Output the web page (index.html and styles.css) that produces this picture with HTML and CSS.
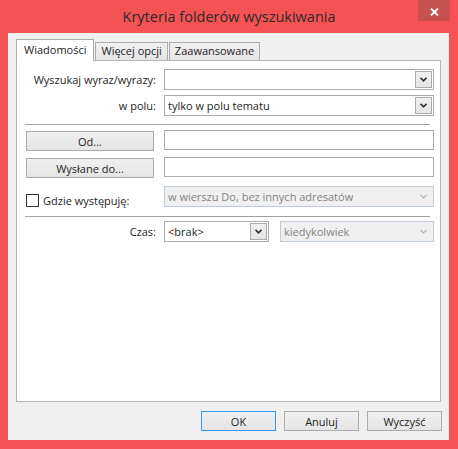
FILE: index.html
```html
<!DOCTYPE html>
<html lang="pl">
<head>
  <meta charset="UTF-8">
  <meta name="viewport" content="width=device-width, initial-scale=1.0">
  <title>Kryteria folderów wyszukiwania</title>
  <link rel="stylesheet" href="styles.css">
</head>
<body>

  <div class="window">
    <!-- Title bar -->
    <div class="titlebar">
      <span class="title">Kryteria folderów wyszukiwania</span>
      <button class="close" aria-label="Zamknij">
        <svg width="9" height="8" viewBox="0 0 9 8"><path d="M1 0.5 L8 7.5 M8 0.5 L1 7.5" stroke="#fff" stroke-width="1.8" fill="none"/></svg>
      </button>
    </div>

    <div class="client">
      <!-- Tabs -->
      <div class="tabs">
        <div class="tab active">Wiadomości</div>
        <div class="tab">Więcej opcji</div>
        <div class="tab">Zaawansowane</div>
      </div>

      <div class="panel">
        <div class="row">
          <label class="label">Wyszukaj wyraz/wyrazy:</label>
          <div class="combo wide">
            <span class="combo-text"></span>
            <span class="combo-btn"><svg width="7" height="5" viewBox="0 0 7 5"><path d="M0.5 0.8 L3.5 3.8 L6.5 0.8" stroke="#333" stroke-width="1.7" fill="none"/></svg></span>
          </div>
        </div>

        <div class="row gap-5">
          <label class="label">w polu:</label>
          <div class="combo wide">
            <span class="combo-text">tylko w polu tematu</span>
            <span class="combo-btn"><svg width="7" height="5" viewBox="0 0 7 5"><path d="M0.5 0.8 L3.5 3.8 L6.5 0.8" stroke="#333" stroke-width="1.7" fill="none"/></svg></span>
          </div>
        </div>

        <div class="separator"></div>

        <div class="row gap-4">
          <div class="label-cell"><button class="btn side">Od...</button></div>
          <input class="text-input" type="text">
        </div>

        <div class="row gap-6">
          <div class="label-cell"><button class="btn side">Wysłane do...</button></div>
          <input class="text-input" type="text">
        </div>

        <div class="row gap-7">
          <div class="label-cell check-cell">
            <span class="checkbox"></span>
            <span>Gdzie występuję:</span>
          </div>
          <div class="combo wide disabled">
            <span class="combo-text">w wierszu Do, bez innych adresatów</span>
            <span class="combo-btn"><svg width="7" height="5" viewBox="0 0 7 5"><path d="M0.5 0.8 L3.5 3.8 L6.5 0.8" stroke="#b4b4b4" stroke-width="1.2" fill="none"/></svg></span>
          </div>
        </div>

        <div class="separator"></div>

        <div class="row gap-3">
          <label class="label">Czas:</label>
          <div class="combo-pair">
            <div class="combo short">
              <span class="combo-text">&lt;brak&gt;</span>
              <span class="combo-btn"><svg width="7" height="5" viewBox="0 0 7 5"><path d="M0.5 0.8 L3.5 3.8 L6.5 0.8" stroke="#333" stroke-width="1.7" fill="none"/></svg></span>
            </div>
            <div class="combo medium disabled">
              <span class="combo-text">kiedykolwiek</span>
              <span class="combo-btn"><svg width="7" height="5" viewBox="0 0 7 5"><path d="M0.5 0.8 L3.5 3.8 L6.5 0.8" stroke="#b4b4b4" stroke-width="1.2" fill="none"/></svg></span>
            </div>
          </div>
        </div>
      </div>

      <!-- Dialog buttons -->
      <div class="actions">
        <button class="btn action default">OK</button>
        <button class="btn action">Anuluj</button>
        <button class="btn action">Wyczyść</button>
      </div>
    </div>
  </div>

</body>
</html>
```

FILE: styles.css
```css
body {
  margin: 0;
  padding: 0;
  font-family: "Open Sans", "Noto Sans", sans-serif;
  font-size: 11px;
  color: #1e1e1e;
}

.window {
  width: 458px;
  height: 449px;
  background-color: #f55353;
  display: flex;
  flex-direction: column;
  box-sizing: border-box;
  padding: 0 9px 9px 8px;
}

/* Title bar */
.titlebar {
  position: relative;
  height: 33px;
  margin: 0 -9px 0 -8px;
  display: flex;
  justify-content: center;
  align-items: center;
}

.title {
  font-size: 14.5px;
  color: #2a2a2a;
  margin-top: -1px;
}

.close {
  position: absolute;
  top: 0;
  right: 8px;
  width: 32px;
  height: 21px;
  border: none;
  padding: 0;
  background-color: #c75050;
  display: flex;
  justify-content: center;
  align-items: center;
  padding-top: 3px;
}

/* Client area */
.client {
  flex: 1;
  background-color: #f0f0f0;
  display: flex;
  flex-direction: column;
  padding: 7px 8px 9px 8px;
}

.tabs {
  display: flex;
  align-items: flex-end;
  height: 20px;
  position: relative;
  z-index: 1;
}

.tab {
  height: 18px;
  box-sizing: border-box;
  border: 1px solid #acacac;
  border-bottom: none;
  background: linear-gradient(#f0f0f0, #e5e5e5);
  padding: 0 5px;
  line-height: 16px;
  margin-left: 1px;
}

.tab.active {
  height: 22px;
  margin-bottom: -1px;
  background: #fff;
  padding: 0 7px;
  line-height: 20px;
  margin-left: 0;
  margin-right: 0;
}

.panel {
  height: 342px;
  box-sizing: border-box;
  background-color: #fff;
  border: 1px solid #b5b5b5;
  padding: 8px 6px 0 8px;
}

.row {
  display: flex;
  align-items: center;
}

.gap-3 { margin-top: 3px; }
.gap-4 { margin-top: 4px; }
.gap-5 { margin-top: 5px; }
.gap-6 { margin-top: 6px; }
.gap-7 { margin-top: 7px; }

.label,
.label-cell {
  width: 131px;
  margin-right: 8px;
  flex-shrink: 0;
}

.label {
  text-align: right;
}

.check-cell {
  display: flex;
  align-items: center;
  gap: 4px;
  padding-top: 8px;
  margin-left: 1px;
  width: 130px;
}

.checkbox {
  width: 11px;
  height: 11px;
  border: 1px solid #333;
  background-color: #fff;
}

.separator {
  width: 405px;
  height: 0;
  border-top: 1px solid #a0a0a0;
  border-bottom: 1px solid #fff;
  margin-top: 8px;
}

/* Combo boxes */
.combo {
  height: 21px;
  box-sizing: border-box;
  border: 1px solid #acacac;
  background-color: #fff;
  display: flex;
  align-items: center;
  justify-content: space-between;
  padding: 0 1px 0 3px;
}

.combo.wide { width: 270px; }
.combo.short { width: 105px; }
.combo.medium { width: 154px; }

.combo-pair {
  display: flex;
  gap: 11px;
}

.combo-text {
  white-space: nowrap;
  overflow: hidden;
}

.combo-btn {
  width: 17px;
  height: 17px;
  box-sizing: border-box;
  border: 1px solid #acacac;
  background: linear-gradient(#f0f0f0, #e5e5e5);
  display: flex;
  justify-content: center;
  align-items: center;
  flex-shrink: 0;
}

.combo.disabled {
  background-color: #f0f0f0;
  border-color: #bfcbdc;
  color: #838383;
}

.combo.disabled .combo-btn {
  border: none;
  background: none;
}

.text-input {
  width: 270px;
  height: 20px;
  box-sizing: border-box;
  border: 1px solid #acacac;
  margin: 0;
  align-self: flex-start;
}

/* Buttons */
.btn {
  font-family: inherit;
  font-size: 11px;
  color: #1e1e1e;
  height: 20px;
  box-sizing: border-box;
  border: 1px solid #acacac;
  background: linear-gradient(#f0f0f0, #e5e5e5);
  padding: 0;
}

.btn.side {
  width: 128px;
  margin-left: 1px;
  margin-top: 1px;
  display: block;
}

.actions {
  display: flex;
  justify-content: flex-end;
  gap: 8px;
  margin-top: 9px;
  margin-right: -1px;
}

.btn.action {
  width: 75px;
}

.btn.default {
  border-color: #3399ff;
}
```
